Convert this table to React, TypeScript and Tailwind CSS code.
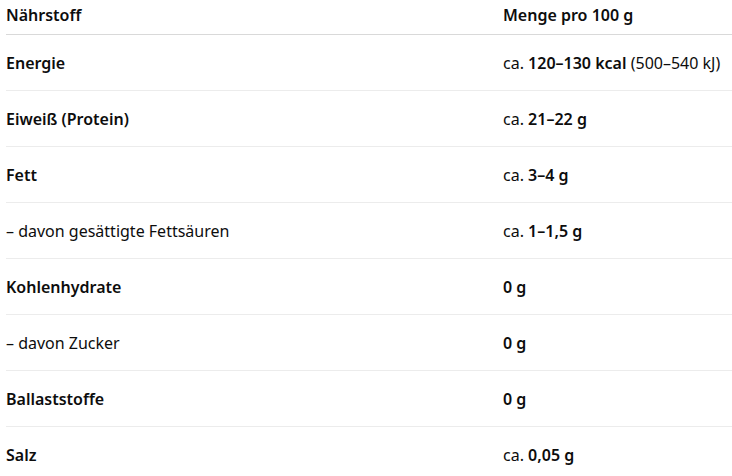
import React from "react";

type Row = { label: string; bold: boolean; value: React.ReactNode };

const B = ({ children }: { children: React.ReactNode }) => (
  <span className="font-semibold">{children}</span>
);

const rows: Row[] = [
  {
    label: "Energie",
    bold: true,
    value: (
      <>
        ca. <B>120–130 kcal</B> (500–540 kJ)
      </>
    ),
  },
  { label: "Eiweiß (Protein)", bold: true, value: <>ca. <B>21–22 g</B></> },
  { label: "Fett", bold: true, value: <>ca. <B>3–4 g</B></> },
  { label: "– davon gesättigte Fettsäuren", bold: false, value: <>ca. <B>1–1,5 g</B></> },
  { label: "Kohlenhydrate", bold: true, value: <B>0 g</B> },
  { label: "– davon Zucker", bold: false, value: <B>0 g</B> },
  { label: "Ballaststoffe", bold: true, value: <B>0 g</B> },
  { label: "Salz", bold: true, value: <>ca. <B>0,05 g</B></> },
];

export default function App() {
  return (
    <div
      className="w-[732px] h-[476px] overflow-hidden bg-white text-[#0d0d0d] text-[16px] pl-[6px]"
      style={{ fontFamily: '"Noto Sans", "Open Sans", sans-serif' }}
    >
      <div className="grid grid-cols-[497px_1fr] h-[35px] border-b border-[#d9d9d9] items-center pb-[5px] font-semibold">
        <div>Nährstoff</div>
        <div>Menge pro 100 g</div>
      </div>
      {rows.map((r, i) => (
        <div
          key={i}
          className="grid grid-cols-[497px_1fr] h-[56px] shrink-0 border-b border-[#ececec] items-center"
        >
          <div className={r.bold ? "font-semibold" : "font-normal"}>{r.label}</div>
          <div>{r.value}</div>
        </div>
      ))}
    </div>
  );
}
